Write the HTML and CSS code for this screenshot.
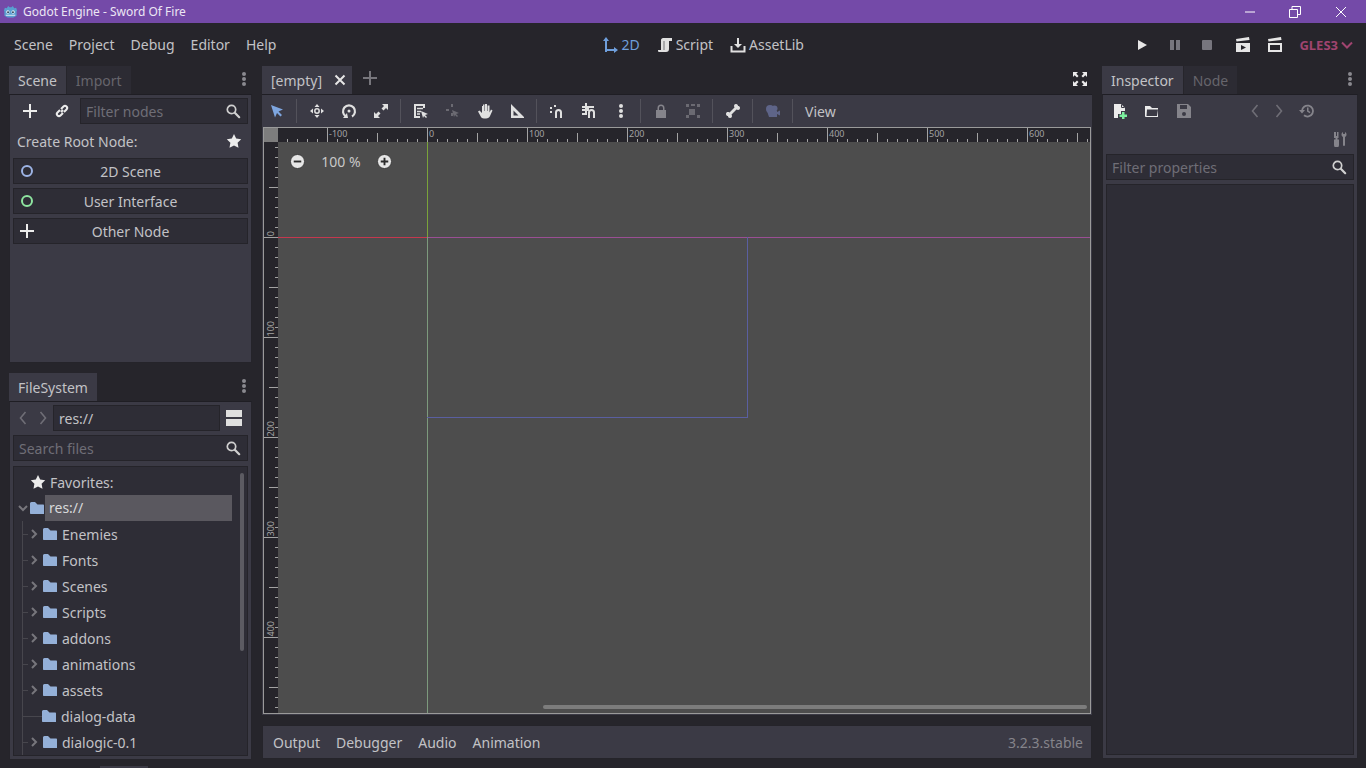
FILE: index.html
```html
<!DOCTYPE html>
<html lang="en">
<head>
    <meta charset="UTF-8">
    <meta name="viewport" content="width=device-width, initial-scale=1.0">
    <title>Godot Engine - Sword Of Fire</title>
    <link rel="stylesheet" href="styles.css">
</head>
<body>
    <svg class="defs" width="0" height="0">
        <symbol id="i-search" viewBox="0 0 16 16"><circle cx="6.5" cy="6.5" r="4.2" fill="none" stroke="currentColor" stroke-width="1.7"/><path d="M9.8 9.8l4.4 4.4" stroke="currentColor" stroke-width="2.2" stroke-linecap="round"/></symbol>
        <symbol id="i-plus" viewBox="0 0 16 16"><path d="M7 1h2v6h6v2H9v6H7V9H1V7h6z" fill="currentColor"/></symbol>
        <symbol id="i-star" viewBox="0 0 16 16"><path d="M8 1l2.2 4.6 5 .7-3.6 3.5.9 5L8 12.4l-4.5 2.4.9-5L.8 6.3l5-.7z" fill="currentColor"/></symbol>
        <symbol id="i-folder" viewBox="0 0 14 14"><path d="M0 2.5C0 2 .5 1 1.5 1H5l2.5 2.5H13c.6 0 1 .4 1 1V13H1c-.6 0-1-.4-1-1z" fill="#94b0d8"/></symbol>
        <symbol id="i-right" viewBox="0 0 8 12"><path d="M2 2l4 4-4 4" fill="none" stroke="currentColor" stroke-width="2"/></symbol>
        <symbol id="i-dots" viewBox="0 0 16 16"><circle cx="8" cy="3" r="2" fill="currentColor"/><circle cx="8" cy="8" r="2" fill="currentColor"/><circle cx="8" cy="13" r="2" fill="currentColor"/></symbol>
        <symbol id="i-prev" viewBox="0 0 10 16"><path d="M7.5 2L2.5 8l5 6" fill="none" stroke="currentColor" stroke-width="1.6"/></symbol>
        <symbol id="i-next" viewBox="0 0 10 16"><path d="M2.5 2l5 6-5 6" fill="none" stroke="currentColor" stroke-width="1.6"/></symbol>
    </svg>

    <div class="titlebar">
        <svg class="title-logo" viewBox="0 0 16 16"><path d="M1 7l1-3 2 .5L5.5 2 7 3.5h2L10.500 2 12 4.500 14 4l1 3-.5 1v4.500L11 14.500H5L1.500 12.500V8z" fill="#5a9fd0"/><circle cx="5.200" cy="8.500" r="1.800" fill="#e8eef5"/><circle cx="10.800" cy="8.500" r="1.800" fill="#e8eef5"/><circle cx="5.400" cy="8.700" r="1" fill="#2a3f55"/><circle cx="10.600" cy="8.700" r="1" fill="#2a3f55"/><path d="M3 12h10" stroke="#e8eef5" stroke-width="1"/></svg>
        <span class="title-text">Godot Engine - Sword Of Fire</span>
        <div class="winctl">
            <svg class="win-min" viewBox="0 0 12 12"><path d="M1 6h10" stroke="#fff" stroke-width="1"/></svg>
            <svg class="win-max" viewBox="0 0 12 12"><path d="M.5 3.500h8v8h-8zM3 3.500V.5h8.500v8H8.500" fill="none" stroke="#fff" stroke-width="1"/></svg>
            <svg class="win-close" viewBox="0 0 12 12"><path d="M1 1l10 10M11 1L1 11" stroke="#fff" stroke-width="1"/></svg>
        </div>
    </div>

    <div class="menubar">
        <div class="menu">
            <span>Scene</span><span>Project</span><span>Debug</span><span>Editor</span><span>Help</span>
        </div>
        <div class="modes">
            <div class="mode mode-on">
                <svg class="ico" viewBox="0 0 16 16"><path d="M4 15V3M4 13h10" fill="none" stroke="currentColor" stroke-width="2"/><path d="M4 0l3 4H1zM16 13l-4 3v-6z" fill="currentColor"/></svg>
                <span>2D</span>
            </div>
            <div class="mode">
                <svg class="ico" viewBox="0 0 16 16"><path d="M6 1h9v3h-3v8c0 2-1 3-3 3H2c-1 0-1-1-1-2h2l1 0V3c0-1 1-2 2-2z" fill="currentColor"/><path d="M7 4v9" stroke="#26252b" stroke-width=".6"/></svg>
                <span>Script</span>
            </div>
            <div class="mode">
                <svg class="ico" viewBox="0 0 16 16"><path d="M7 1h2v6h3l-4 4-4-4h3z" fill="currentColor"/><path d="M1.500 9v5.500h13V9" fill="none" stroke="currentColor" stroke-width="2"/></svg>
                <span>AssetLib</span>
            </div>
        </div>
        <div class="runbar">
            <svg class="ico run-play" viewBox="0 0 16 16"><path d="M4 3l9 5-9 5z" fill="#e6e6e6"/></svg>
            <svg class="ico run-pause" viewBox="0 0 16 16"><path d="M3 3h4v10H3zM9 3h4v10H9z" fill="#77767e"/></svg>
            <svg class="ico run-stop" viewBox="0 0 16 16"><rect x="3" y="3" width="10" height="10" rx="1" fill="#77767e"/></svg>
            <svg class="ico run-clap" viewBox="0 0 16 16"><path d="M1 2l13-2 .5 3-13 1.500zM1 6h14v9H1z" fill="#e6e6e6"/><path d="M6 8l5 2.500L6 13z" fill="#26252b"/></svg>
            <svg class="ico run-clap2" viewBox="0 0 16 16"><path d="M1 2l13-2 .5 3-13 1.500zM1 6h14v9H1z" fill="#e6e6e6"/><path d="M3 8h10v5H3z" fill="#26252b"/></svg>
            <span class="gles">GLES3</span>
            <svg class="gles-arrow" viewBox="0 0 12 8"><path d="M1 1.500l5 5 5-5" fill="none" stroke="#a0446f" stroke-width="2"/></svg>
        </div>
    </div>

    <div class="main">
        <div class="col-left">
            <div class="dock dock-scene">
                <div class="tabs">
                    <div class="tab tab-on">Scene</div>
                    <div class="tab">Import</div>
                    <svg class="dots"><use href="#i-dots"/></svg>
                </div>
                <div class="panel">
                    <div class="scene-top">
                        <svg class="ico ico-white"><use href="#i-plus"/></svg>
                        <svg class="ico ico-white link" viewBox="0 0 16 16"><path d="M7 9l2-2M6 7L3.500 9.500a2.100 2.100 0 0 0 3 3L9 10M7 6l2.500-2.500a2.100 2.100 0 0 1 3 3L10 9" fill="none" stroke="currentColor" stroke-width="2"/></svg>
                        <div class="field field-filter"><span class="ph">Filter nodes</span><svg class="ico field-ico"><use href="#i-search"/></svg></div>
                    </div>
                    <div class="root-label"><span>Create Root Node:</span><svg class="ico ico-white"><use href="#i-star"/></svg></div>
                    <div class="rootbtn"><svg class="ico" viewBox="0 0 16 16"><circle cx="8" cy="8" r="5" fill="none" stroke="#9db4e6" stroke-width="2"/></svg><span>2D Scene</span></div>
                    <div class="rootbtn"><svg class="ico" viewBox="0 0 16 16"><circle cx="8" cy="8" r="5" fill="none" stroke="#8ee5a0" stroke-width="2"/></svg><span>User Interface</span></div>
                    <div class="rootbtn"><svg class="ico ico-white"><use href="#i-plus"/></svg><span>Other Node</span></div>
                </div>
            </div>

            <div class="dock dock-files">
                <div class="tabs">
                    <div class="tab tab-on">FileSystem</div>
                    <svg class="dots"><use href="#i-dots"/></svg>
                </div>
                <div class="panel">
                    <div class="path-row">
                        <svg class="nav"><use href="#i-prev"/></svg>
                        <svg class="nav"><use href="#i-next"/></svg>
                        <div class="field field-path"><span>res://</span></div>
                        <div class="split"><i></i><i></i></div>
                    </div>
                    <div class="field field-search"><span class="ph">Search files</span><svg class="ico field-ico"><use href="#i-search"/></svg></div>
                    <div class="tree">
                        <div class="row row-fav"><svg class="ico ico-white"><use href="#i-star"/></svg><span>Favorites:</span></div>
                        <div class="row row-root">
                            <svg class="arrow-down" viewBox="0 0 12 8"><path d="M2 2l4 4 4-4" fill="none" stroke="currentColor" stroke-width="2"/></svg>
                            <svg class="folder"><use href="#i-folder"/></svg>
                            <span class="sel">res://</span>
                        </div>
                        <div class="kids">
                            <div class="row"><i class="tline"></i><svg class="arrow"><use href="#i-right"/></svg><svg class="folder"><use href="#i-folder"/></svg><span>Enemies</span></div>
                            <div class="row"><i class="tline"></i><svg class="arrow"><use href="#i-right"/></svg><svg class="folder"><use href="#i-folder"/></svg><span>Fonts</span></div>
                            <div class="row"><i class="tline"></i><svg class="arrow"><use href="#i-right"/></svg><svg class="folder"><use href="#i-folder"/></svg><span>Scenes</span></div>
                            <div class="row"><i class="tline"></i><svg class="arrow"><use href="#i-right"/></svg><svg class="folder"><use href="#i-folder"/></svg><span>Scripts</span></div>
                            <div class="row"><i class="tline"></i><svg class="arrow"><use href="#i-right"/></svg><svg class="folder"><use href="#i-folder"/></svg><span>addons</span></div>
                            <div class="row"><i class="tline"></i><svg class="arrow"><use href="#i-right"/></svg><svg class="folder"><use href="#i-folder"/></svg><span>animations</span></div>
                            <div class="row"><i class="tline"></i><svg class="arrow"><use href="#i-right"/></svg><svg class="folder"><use href="#i-folder"/></svg><span>assets</span></div>
                            <div class="row"><i class="tline tline-long"></i><svg class="folder"><use href="#i-folder"/></svg><span>dialog-data</span></div>
                            <div class="row"><i class="tline"></i><svg class="arrow"><use href="#i-right"/></svg><svg class="folder"><use href="#i-folder"/></svg><span>dialogic-0.1</span></div>
                        </div>
                        <div class="tree-scroll"></div>
                    </div>
                </div>
            </div>
        </div>

        <div class="col-center">
            <div class="scene-tabs">
                <div class="tab tab-on tab-scene">
                    <span>[empty]</span>
                    <svg class="tab-x" viewBox="0 0 12 12"><path d="M1.500 1.500l9 9M10.500 1.500l-9 9" stroke="#e6e6e6" stroke-width="2"/></svg>
                </div>
                <svg class="ico tab-add"><use href="#i-plus"/></svg>
                <svg class="ico ico-white fullscreen" viewBox="0 0 16 16"><path d="M1 1h5L4.300 2.700 6.500 5 5 6.500 2.700 4.300 1 6zM15 1v5l-1.700-1.700L11 6.500 9.500 5l2.200-2.300L10 1zM1 15v-5l1.700 1.700L5 9.500 6.500 11l-2.200 2.300L6 15zM15 15h-5l1.700-1.700L9.500 11 11 9.500l2.300 2.200L15 10z" fill="currentColor"/></svg>
            </div>
            <div class="editor">
                <div class="toolbar">
                    <div class="tool"><svg class="ico" viewBox="0 0 16 16"><path d="M2 2l12 4.500-4.500 2L13 12l-1.500 1.500-3.500-3.500-2 4.500z" fill="#7ea6e0"/></svg></div>
                    <i class="sep"></i>
                    <div class="tool"><svg class="ico" viewBox="0 0 16 16"><circle cx="8" cy="8" r="2.200" fill="none" stroke="currentColor" stroke-width="1.500"/><path d="M8 1l2.500 3h-5zM8 15l-2.500-3h5zM1 8l3-2.500v5zM15 8l-3 2.500v-5z" fill="currentColor"/></svg></div>
                    <div class="tool"><svg class="ico" viewBox="0 0 16 16"><path d="M5 13.500A6 6 0 1 1 11 13.500" fill="none" stroke="currentColor" stroke-width="2.200"/><circle cx="8" cy="8" r="1.500" fill="currentColor"/><path d="M2 15l5 0-1-5z" fill="currentColor"/></svg></div>
                    <div class="tool"><svg class="ico" viewBox="0 0 16 16"><path d="M9 1h6v6l-2-2-2.500 2.500-2-2L11 3zM7 15H1V9l2 2 2.500-2.500 2 2L5 13z" fill="currentColor"/></svg></div>
                    <i class="sep"></i>
                    <div class="tool"><svg class="ico" viewBox="0 0 16 16"><path d="M1 1h11v4H10V3H3v10h4v2H1z" fill="currentColor"/><path d="M4 5.500h6M4 8.500h4M4 11h3" stroke="currentColor" stroke-width="1.500"/><path d="M8 8l7 3-3 1 2 2-1 1-2-2-1 2z" fill="currentColor"/></svg></div>
                    <div class="tool tool-off"><svg class="ico" viewBox="0 0 16 16"><path d="M6 1h2v3H6zM1 6h3v2H1zM9 6h3M6 10h2v3H6z" fill="currentColor"/><path d="M7 7l7 3-3 1 2 2-1 1-2-2-1 2z" fill="currentColor"/></svg></div>
                    <div class="tool"><svg class="ico" viewBox="0 0 16 16"><path d="M6 1.500h1.500V8H8V1h2v7h.500V2.500h2V9.500L14 6.500l1.500 1L13 13c-.5 1.500-2 2.500-4 2.500H7c-2 0-3-1-3.500-2.500L1 8.500 2.500 7.500 5 10V3h1z" fill="currentColor"/></svg></div>
                    <div class="tool"><svg class="ico" viewBox="0 0 16 16"><path d="M2 1l13 13v1H2zM4.500 7.500v5h5z" fill="currentColor" fill-rule="evenodd"/></svg></div>
                    <i class="sep"></i>
                    <div class="tool"><svg class="ico" viewBox="0 0 16 16"><path d="M6 11V9.500a3.500 3.500 0 0 1 7 0V15h-2V9.500a1.500 1.500 0 0 0-3 0V15H6zM1 4h2v2H1zM5 2h2v2H5zM1 8h2v2H1z" fill="currentColor"/></svg></div>
                    <div class="tool"><svg class="ico" viewBox="0 0 16 16"><path d="M1 3h12v2H8v3H1V6h5V5H1zM4 0h2v12H4zM7 9.500a3.500 3.500 0 0 1 7 0V15h-2V9.500a1.500 1.500 0 0 0-3 0V15H7zM1 10h4v2H1z" fill="currentColor"/></svg></div>
                    <div class="tool"><svg class="ico"><use href="#i-dots"/></svg></div>
                    <i class="sep"></i>
                    <div class="tool tool-dim"><svg class="ico" viewBox="0 0 16 16"><path d="M3 7h1.500V5a3.500 3.500 0 0 1 7 0v2H13v8H3zm3 0h4V5a2 2 0 0 0-4 0z" fill="currentColor"/></svg></div>
                    <div class="tool tool-off"><svg class="ico" viewBox="0 0 16 16"><path d="M1 1h3v3H1zM12 1h3v3h-3zM1 12h3v3H1zM12 12h3v3h-3zM6 1h4v2H6zM4 6h6v6H4z" fill="currentColor"/></svg></div>
                    <i class="sep"></i>
                    <div class="tool"><svg class="ico" viewBox="0 0 16 16"><path d="M11 1c1.500 0 2 1 2 2 1 0 2 .5 2 2 0 2-2 2.500-3.500 1.500L6.500 11.500C7.500 13 7 15 5 15c-1.500 0-2-1-2-2-1 0-2-.5-2-2 0-2 2-2.500 3.500-1.500l5-5C8.500 3 9 1 11 1z" fill="currentColor"/></svg></div>
                    <i class="sep"></i>
                    <div class="tool"><svg class="ico" viewBox="0 0 16 16"><circle cx="5" cy="6" r="4" fill="#5e6488"/><circle cx="9.500" cy="5.500" r="3" fill="#5e6488"/><path d="M2 8h10v6H4zM12 9l3-1.500v5L12 11z" fill="#5e6488"/></svg></div>
                    <i class="sep"></i>
                    <span class="view-btn">View</span>
                </div>
                <div class="viewport">
                    <div class="corner"></div>
                    <div class="hruler">
                        <span class="hlabel hl-1">-100</span>
                        <span class="hlabel hl-2">0</span>
                        <span class="hlabel hl-3">100</span>
                        <span class="hlabel hl-4">200</span>
                        <span class="hlabel hl-5">300</span>
                        <span class="hlabel hl-6">400</span>
                        <span class="hlabel hl-7">500</span>
                        <span class="hlabel hl-8">600</span>
                    </div>
                    <div class="vruler">
                        <span class="vlabel vl-0">0</span>
                        <span class="vlabel vl-1">100</span>
                        <span class="vlabel vl-2">200</span>
                        <span class="vlabel vl-3">300</span>
                        <span class="vlabel vl-4">400</span>
                    </div>
                    <div class="canvas">
                        <i class="axis-y"></i>
                        <i class="axis-y2"></i>
                        <i class="axis-x"></i>
                        <i class="axis-x2"></i>
                        <i class="screen-rect"></i>
                        <div class="zoombox">
                            <svg class="zoombtn" viewBox="0 0 16 16"><circle cx="8" cy="8" r="7.500" fill="#e6e6e6" stroke="#3a3a3a"/><path d="M4 7h8v2H4z" fill="#2b2b2b"/></svg>
                            <span>100 %</span>
                            <svg class="zoombtn" viewBox="0 0 16 16"><circle cx="8" cy="8" r="7.500" fill="#e6e6e6" stroke="#3a3a3a"/><path d="M7 4h2v3h3v2H9v3H7V9H4V7h3z" fill="#2b2b2b"/></svg>
                        </div>
                        <i class="hscroll"></i>
                    </div>
                </div>
            </div>
            <div class="bottombar">
                <span>Output</span><span>Debugger</span><span>Audio</span><span>Animation</span>
                <span class="version">3.2.3.stable</span>
            </div>
        </div>

        <div class="col-right">
            <div class="tabs">
                <div class="tab tab-on">Inspector</div>
                <div class="tab">Node</div>
                <svg class="dots"><use href="#i-dots"/></svg>
            </div>
            <div class="panel panel-insp">
                <div class="insp-row">
                    <svg class="ico ico-white" viewBox="0 0 16 16"><path d="M2 1h7l4 4v3H9v3H6v4H2z" fill="currentColor"/><path d="M9.500 1.500v3h3" fill="none" stroke="#3b3a45"/><path d="M10 9h2.500v2.500H15V14h-2.500v2H10v-2H7.500v-2.500H10z" fill="#7df0a0"/></svg>
                    <svg class="ico ico-white" viewBox="0 0 16 16"><path d="M1 3h5l2 2h6v9H2c-.5 0-1-.5-1-1zM3 6.500L2.500 13H13l1-6.500z" fill="currentColor" fill-rule="evenodd"/></svg>
                    <svg class="ico tool-dim" viewBox="0 0 16 16"><path d="M1 1h11l3 3v11H1zM4 2v4h7V2zM8 9a2 2 0 1 0 0 4 2 2 0 0 0 0-4z" fill="currentColor" fill-rule="evenodd"/></svg>
                    <svg class="nav nav-r"><use href="#i-prev"/></svg>
                    <svg class="nav nav-r2"><use href="#i-next"/></svg>
                    <svg class="ico hist" viewBox="0 0 16 16"><path d="M3 8a5.500 5.500 0 1 1 2 4.300" fill="none" stroke="currentColor" stroke-width="1.800"/><path d="M0 7h6L3 10.500zM8 4.500h1.500v3.200l2 1.300-.8 1.200L8 8.500z" fill="currentColor"/></svg>
                </div>
                <div class="insp-row2">
                    <svg class="ico hist" viewBox="0 0 16 16"><path d="M3 1h1v4h1V1h1.500v6H5.500v1.500H7V14a2.500 2.500 0 0 1-5 0V8.500h1.500V7H2V1zM11 1c0 2 0 2 1 2s1 0 1-2c2 1 2 4 0 5v8a1 1 0 0 1-2 0V6c-2-1-2-4 0-5z" fill="currentColor"/></svg>
                </div>
                <div class="field field-props"><span class="ph">Filter properties</span><svg class="ico field-ico"><use href="#i-search"/></svg></div>
                <div class="props"></div>
            </div>
        </div>
    </div>

    <div class="footbar"><i></i></div>
</body>
</html>
```

FILE: styles.css
```css
* {
    box-sizing: border-box;
}
body {
    margin: 0;
    width: 1366px;
    height: 768px;
    overflow: hidden;
    display: flex;
    flex-direction: column;
    background-color: #26252b;
    color: #c2c2c6;
    font-family: "Noto Sans", sans-serif;
    font-size: 14px;
}
.defs {
    position: absolute;
}
.ico {
    width: 16px;
    height: 16px;
    display: block;
    flex: none;
    color: #e0e0e0;
}
.ico-white {
    color: #ececec;
}
.ph {
    color: #6f6e76;
}

/* window title */
.titlebar {
    height: 23px;
    flex: none;
    display: flex;
    align-items: center;
    padding-left: 3px;
    background-color: #744aa8;
    color: #ece6f4;
    font-size: 12px;
}
.title-logo {
    width: 15px;
    height: 15px;
    margin-right: 5px;
}
.winctl {
    margin-left: auto;
    display: flex;
    align-items: center;
}
.winctl svg {
    width: 12px;
    height: 12px;
    display: block;
}
.win-min {
    margin-right: 33px;
}
.win-max {
    margin-right: 34px;
}
.win-close {
    margin-right: 19px;
}

/* menu row */
.menubar {
    height: 43px;
    flex: none;
    display: flex;
    align-items: center;
    padding-left: 14px;
}
.menu, .modes {
    display: flex;
}
.menu {
    gap: 16px;
}
.modes {
    margin-left: 326px;
    gap: 17px;
}
.mode {
    display: flex;
    align-items: center;
    gap: 3px;
}
.mode-on {
    color: #6f9fdc;
}
.mode-on .ico {
    color: #6f9fdc;
}
.runbar {
    margin-left: auto;
    display: flex;
    align-items: center;
    padding-right: 13px;
}
.run-play {
    margin-right: 17px;
}
.run-pause {
    margin-right: 16px;
}
.run-stop {
    margin-right: 20px;
}
.run-clap {
    margin-right: 16px;
}
.run-clap2 {
    margin-right: 16px;
}
.gles {
    color: #a0446f;
    font-weight: 700;
    font-size: 13px;
}
.gles-arrow {
    width: 12px;
    height: 8px;
    margin-left: 3px;
}

/* docks */
.main {
    height: 693px;
    flex: none;
    display: flex;
    padding-left: 9px;
    gap: 10px;
}
.col-left {
    width: 243px;
    display: flex;
    flex-direction: column;
    gap: 10px;
}
.col-center {
    width: 830px;
    display: flex;
    flex-direction: column;
}
.col-right {
    width: 256px;
    display: flex;
    flex-direction: column;
}
.tabs, .scene-tabs {
    height: 28px;
    flex: none;
    display: flex;
    position: relative;
    align-items: stretch;
}
.tab {
    padding: 0 9px;
    margin-right: 2px;
    display: flex;
    align-items: center;
    background-color: #2c2b33;
    color: #66656c;
}
.tab-on {
    background-color: #3b3a45;
    color: #c2c2c6;
    margin-right: 1px;
}
.dots {
    position: absolute;
    right: 0;
    top: 5px;
    width: 16px;
    height: 16px;
    color: #8a898f;
}
.panel {
    flex: 1;
    background-color: #3b3a45;
    border: 1px solid #25242a;
    border-top-color: #1f1e24;
    padding: 3px 3px 3px;
    display: flex;
    flex-direction: column;
}
.dock-scene {
    height: 297px;
    flex: none;
    display: flex;
    flex-direction: column;
}
.dock-files {
    flex: 1;
    min-height: 0;
    display: flex;
    flex-direction: column;
}
.field {
    height: 26px;
    display: flex;
    align-items: center;
    padding: 0 6px 0 5px;
    background-color: #2e2d36;
    border: 1px solid #25242a;
}
.field-ico {
    margin-left: auto;
    color: #d0d0d0;
}
.scene-top {
    display: flex;
    align-items: center;
}
.scene-top .ico {
    margin-left: 9px;
}
.scene-top .link {
    margin: 0 10px 0 16px;
}
.scene-top .field-ico {
    margin-left: auto;
}
.field-filter {
    width: 171px;
}
.root-label {
    height: 34px;
    display: flex;
    align-items: center;
    justify-content: space-between;
    padding: 0 6px 0 4px;
}
.rootbtn {
    height: 26px;
    margin-bottom: 4px;
    position: relative;
    display: flex;
    align-items: center;
    justify-content: center;
    background-color: #2e2d36;
    border: 1px solid #25242a;
}
.rootbtn .ico {
    position: absolute;
    left: 5px;
    top: 4px;
}

/* filesystem */
.path-row {
    display: flex;
    align-items: center;
    margin-bottom: 4px;
}
.nav {
    width: 10px;
    height: 16px;
    color: #6f6e76;
    display: block;
    flex: none;
}
.path-row .nav {
    margin: 0 5px;
}
.field-path {
    width: 167px;
    margin-left: 0;
}
.split {
    margin-left: 6px;
    width: 16px;
    display: flex;
    flex-direction: column;
    gap: 2px;
}
.split i {
    height: 7px;
    background-color: #e0e0e0;
}
.field-search {
    flex: none;
}
.tree {
    margin-top: 5px;
    flex: 1;
    min-height: 0;
    position: relative;
    overflow: hidden;
    padding-top: 2px;
    background-color: #2e2d36;
    border: 1px solid #25242a;
}
.row {
    height: 26px;
    display: flex;
    align-items: center;
}
.row-fav {
    padding-left: 16px;
    gap: 4px;
}
.row-root {
    padding-left: 3px;
    color: #d8d8da;
}
.arrow-down {
    width: 12px;
    height: 8px;
    margin-right: 1px;
    color: #77767c;
}
.folder {
    width: 14px;
    height: 14px;
    display: block;
    flex: none;
}
.sel {
    width: 187px;
    height: 26px;
    margin-left: 1px;
    padding-left: 4px;
    line-height: 26px;
    background-color: #5a585f;
}
.kids {
    margin-left: 8px;
    border-left: 1px solid #47464d;
}
.kids .folder {
    margin-right: 5px;
}
.tline {
    width: 5px;
    height: 1px;
    flex: none;
    background-color: #47464d;
}
.tline-long {
    width: 19px;
}
.arrow {
    width: 8px;
    height: 12px;
    margin: 0 5px 0 2px;
    flex: none;
    color: #77767c;
}
.tree-scroll {
    position: absolute;
    left: 226px;
    top: 6px;
    width: 4px;
    height: 178px;
    border-radius: 2px;
    background-color: #5c5b62;
}

/* center */
.tab-scene {
    width: 90px;
    padding: 0 6px 0 9px;
    margin-right: 0;
    justify-content: space-between;
}
.tab-x {
    width: 12px;
    height: 12px;
}
.tab-add {
    margin: 4px 0 0 10px;
    color: #77767c;
}
.fullscreen {
    margin: 5px 4px 0 auto;
}
.editor {
    height: 621px;
    flex: none;
    display: flex;
    flex-direction: column;
    background-color: #3b3a45;
    border-top: 1px solid #1f1e24;
}
.toolbar {
    height: 32px;
    flex: none;
    display: flex;
    align-items: center;
}
.tool {
    width: 32px;
    display: flex;
    justify-content: center;
}
.tool:first-child {
    margin-left: -1px;
}
.tool-off .ico {
    color: #6b6a72;
}
.tool-dim .ico, .ico.tool-dim {
    color: #85848b;
}
.sep {
    width: 1px;
    height: 24px;
    margin: 0 4px 0 3px;
    background-color: #53525b;
}
.view-btn {
    margin-left: 8px;
}
.viewport {
    height: 587px;
    margin: 0 1px 1px 1px;
    border: 1px solid #9a9a9a;
    display: grid;
    grid-template-columns: 14px 1fr;
    grid-template-rows: 14px 1fr;
    background-color: #26252b;
}
.corner {
    background-color: #7d7d7d;
}
.hruler, .vruler {
    position: relative;
    overflow: hidden;
    background-repeat: repeat-x, repeat-x, repeat-x;
}
.hruler {
    background-image:
        linear-gradient(90deg, #a3a3a3 1px, transparent 1px),
        linear-gradient(90deg, #a3a3a3 1px, transparent 1px),
        linear-gradient(90deg, #a3a3a3 1px, transparent 1px);
    background-size: 100px 14px, 50px 9px, 10px 3px;
    background-position: 49px 100%, 49px 100%, 9px 100%;
}
.vruler {
    background-repeat: repeat-y, repeat-y, repeat-y;
    background-image:
        linear-gradient(#a3a3a3 1px, transparent 1px),
        linear-gradient(#a3a3a3 1px, transparent 1px),
        linear-gradient(#a3a3a3 1px, transparent 1px);
    background-size: 14px 100px, 9px 50px, 3px 10px;
    background-position: 100% 95px, 100% 45px, 100% 5px;
}
.hlabel {
    position: absolute;
    top: 0;
    font-size: 9px;
    line-height: 12px;
    color: #a3a3a3;
}
.hl-1 { left: 51px; }
.hl-2 { left: 151px; }
.hl-3 { left: 251px; }
.hl-4 { left: 351px; }
.hl-5 { left: 451px; }
.hl-6 { left: 551px; }
.hl-7 { left: 651px; }
.hl-8 { left: 751px; }
.vlabel {
    position: absolute;
    left: 1px;
    font-size: 9px;
    line-height: 12px;
    color: #a3a3a3;
    writing-mode: vertical-rl;
    transform: rotate(180deg);
}
.vl-0 { bottom: 477px; }
.vl-1 { bottom: 377px; }
.vl-2 { bottom: 277px; }
.vl-3 { bottom: 177px; }
.vl-4 { bottom: 77px; }

/* 2D canvas, origin at 149,95 */
.canvas {
    position: relative;
    overflow: hidden;
    background-color: #4d4d4d;
}
.axis-y, .axis-y2, .axis-x, .axis-x2 {
    position: absolute;
}
.axis-y {
    left: 149px;
    top: 0;
    width: 1px;
    height: 95px;
    background-color: #7aa33a;
}
.axis-y2 {
    left: 149px;
    top: 95px;
    bottom: 0;
    width: 1px;
    background-color: #7d9a7d;
}
.axis-x {
    left: 0;
    top: 95px;
    width: 149px;
    height: 1px;
    background-color: #c5384f;
}
.axis-x2 {
    left: 150px;
    right: 0;
    top: 95px;
    height: 1px;
    background-color: #9a4f94;
}
.screen-rect {
    position: absolute;
    left: 149px;
    top: 95px;
    width: 321px;
    height: 181px;
    border: 1px solid #5a5fa0;
    border-top: none;
    border-left: none;
}
.zoombox {
    position: absolute;
    left: 12px;
    top: 10px;
    display: flex;
    align-items: center;
    color: #c8c8c8;
}
.zoombtn {
    width: 15px;
    height: 15px;
    display: block;
}
.zoombox span {
    width: 72px;
    text-align: center;
}
.hscroll {
    position: absolute;
    left: 265px;
    right: 3px;
    bottom: 4px;
    height: 4px;
    border-radius: 2px;
    background-color: #7c7c7c;
}
.bottombar {
    height: 34px;
    flex: none;
    margin-top: 10px;
    padding: 0 8px 0 10px;
    display: flex;
    align-items: center;
    gap: 16px;
    background-color: #3b3a45;
    border: 1px solid #25242a;
}
.version {
    margin-left: auto;
    color: #85848b;
}

/* inspector */
.panel-insp {
    padding-bottom: 3px;
}
.insp-row {
    height: 26px;
    display: flex;
    align-items: center;
    padding-left: 6px;
}
.insp-row .ico {
    margin-right: 16px;
}
.insp-row .hist, .insp-row2 .hist {
    color: #85848b;
    margin-right: 0;
}
.nav-r {
    margin-left: 42px;
    margin-right: 14px;
}
.nav-r2 {
    margin-right: 15px;
}
.insp-row2 {
    height: 30px;
    display: flex;
    align-items: center;
    justify-content: flex-end;
    padding-right: 6px;
}
.field-props {
    flex: none;
    margin-bottom: 4px;
}
.props {
    flex: 1;
    background-color: #2e2d36;
    border: 1px solid #25242a;
}
.footbar {
    flex: 1;
    display: flex;
    align-items: flex-end;
    padding-left: 100px;
}
.footbar i {
    width: 48px;
    height: 2px;
    background-color: #3b3a45;
}
```
